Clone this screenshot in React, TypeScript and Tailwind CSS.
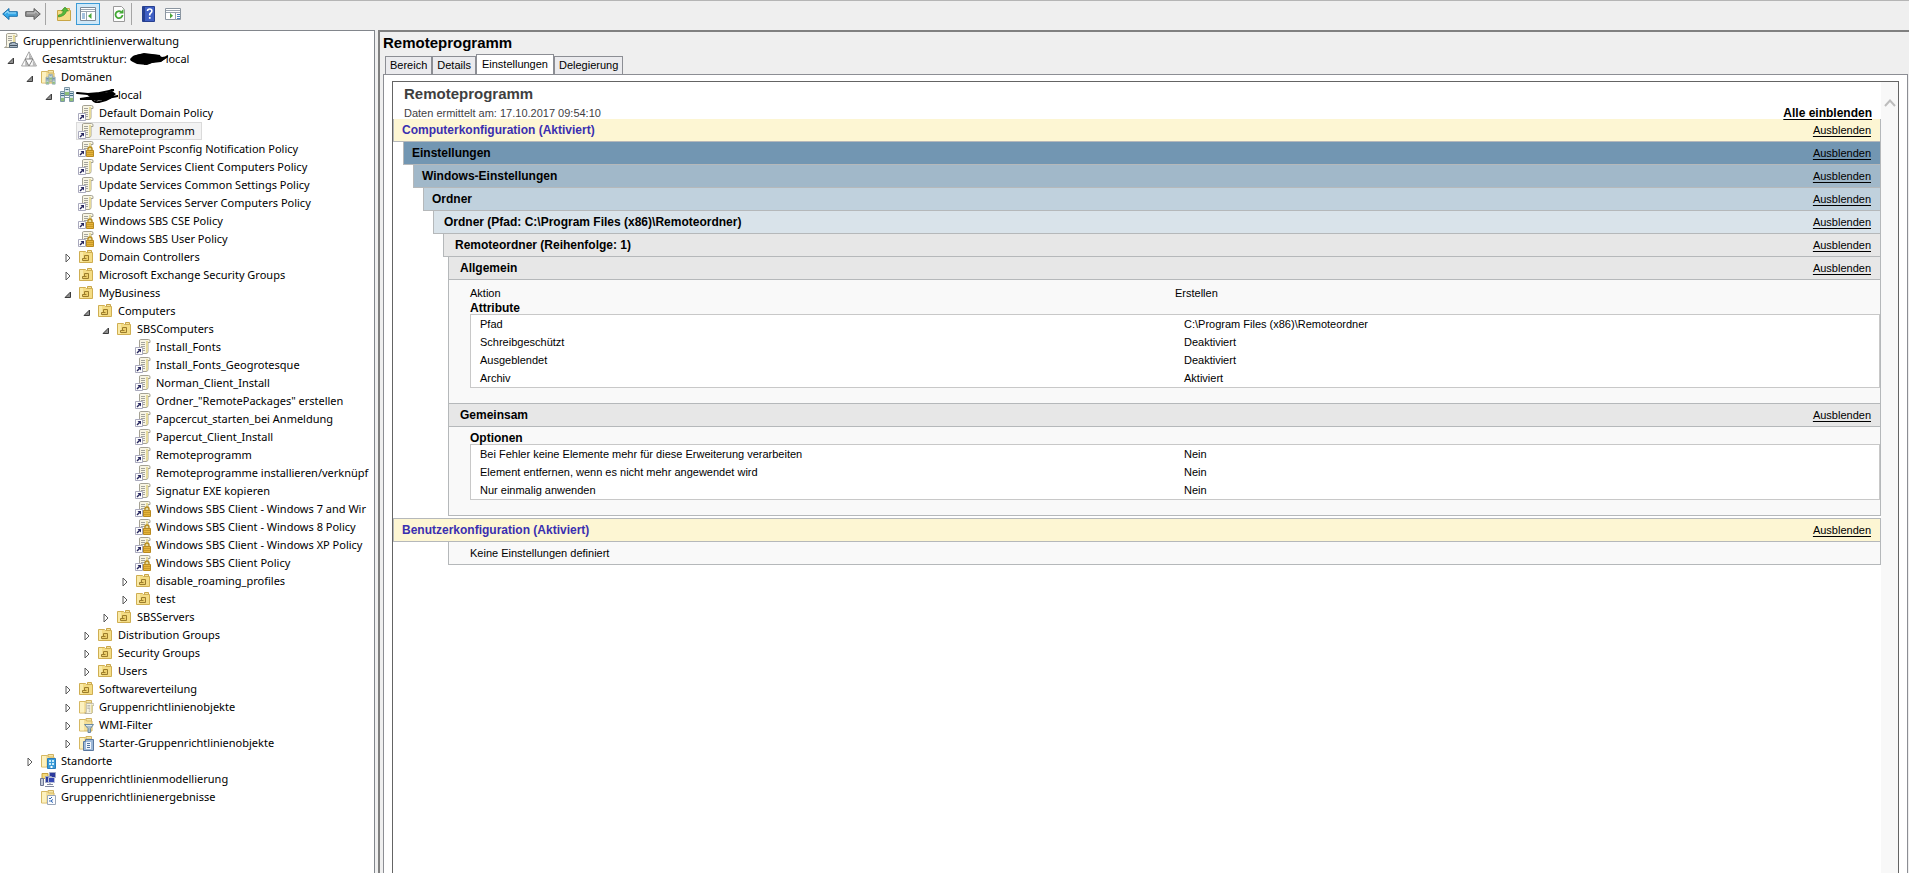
import type { ReactNode } from "react";

type IconName =
  | "root" | "forest" | "domains" | "domain" | "gpo" | "gpoLock" | "ou"
  | "gpoFolder" | "wmi" | "starter" | "sites" | "model" | "result";

type TreeItem = {
  label: string;
  icon: IconName;
  state?: "open" | "closed";
  selected?: boolean;
  redacted?: "forest" | "domain";
  children?: TreeItem[];
};

const gpo = (label: string): TreeItem => ({ label, icon: "gpo" });
const locked = (label: string): TreeItem => ({ label, icon: "gpoLock" });
const closed = (label: string, icon: IconName = "ou"): TreeItem => ({ label, icon, state: "closed" });

const tree: TreeItem[] = [
  {
    label: "Gesamtstruktur:", icon: "forest", state: "open", redacted: "forest",
    children: [
      {
        label: "Domänen", icon: "domains", state: "open",
        children: [
          {
            label: "", icon: "domain", state: "open", redacted: "domain",
            children: [
              gpo("Default Domain Policy"),
              { label: "Remoteprogramm", icon: "gpo", selected: true },
              locked("SharePoint Psconfig Notification Policy"),
              gpo("Update Services Client Computers Policy"),
              gpo("Update Services Common Settings Policy"),
              gpo("Update Services Server Computers Policy"),
              locked("Windows SBS CSE Policy"),
              locked("Windows SBS User Policy"),
              closed("Domain Controllers"),
              closed("Microsoft Exchange Security Groups"),
              {
                label: "MyBusiness", icon: "ou", state: "open",
                children: [
                  {
                    label: "Computers", icon: "ou", state: "open",
                    children: [
                      {
                        label: "SBSComputers", icon: "ou", state: "open",
                        children: [
                          gpo("Install_Fonts"),
                          gpo("Install_Fonts_Geogrotesque"),
                          gpo("Norman_Client_Install"),
                          gpo('Ordner_"RemotePackages" erstellen'),
                          gpo("Papcercut_starten_bei Anmeldung"),
                          gpo("Papercut_Client_Install"),
                          gpo("Remoteprogramm"),
                          gpo("Remoteprogramme installieren/verknüpf"),
                          gpo("Signatur EXE kopieren"),
                          locked("Windows SBS Client - Windows 7 and Wir"),
                          locked("Windows SBS Client - Windows 8 Policy"),
                          locked("Windows SBS Client - Windows XP Policy"),
                          locked("Windows SBS Client Policy"),
                          closed("disable_roaming_profiles"),
                          closed("test"),
                        ],
                      },
                      closed("SBSServers"),
                    ],
                  },
                  closed("Distribution Groups"),
                  closed("Security Groups"),
                  closed("Users"),
                ],
              },
              closed("Softwareverteilung"),
              closed("Gruppenrichtlinienobjekte", "gpoFolder"),
              closed("WMI-Filter", "wmi"),
              closed("Starter-Gruppenrichtlinienobjekte", "starter"),
            ],
          },
        ],
      },
      closed("Standorte", "sites"),
      { label: "Gruppenrichtlinienmodellierung", icon: "model" },
      { label: "Gruppenrichtlinienergebnisse", icon: "result" },
    ],
  },
];

const scroll = (
  <>
    <path d="M5.500 .5h8q1.500 0 1.500 1.500v1.500h-2v9q0 2-2 2H2.500q2 0 2-2V2q0-1.500 1-1.500z" fill="#f8f5e4" stroke="#a5a294" />
    <path d="M11 2v12q2 0 2-2V2z" fill="#e6da9a" />
    <path d="M6 3.500h4M6 5.500h4M6 7.500h4M8 9.500h2M8 11.500h2" stroke="#a3a39c" />
  </>
);

const shortcut = (
  <>
    <path d="M0 8h8v8H0z" fill="#fff" />
    <path d="M.5 8.500h7v7h-7z" fill="#fff" stroke="#a9a9bd" />
    <path d="M2.500 10H6v3.500z" fill="#26265e" />
    <path d="M2 14l2.500-2.500" stroke="#26265e" strokeWidth="1.500" />
  </>
);

const folder = (
  <>
    <path d="M8 1.500h5.500v3H8z" fill="#f5e6a8" stroke="#d0b262" />
    <path d="M1.500 2.500h6l1 1.500h5.500v10h-12.500z" fill="#f5e09a" stroke="#d6b863" />
    <path d="M2 3h4v10.500H2z" fill="#fcf1c0" />
  </>
);

const servers = (
  <>
    <path d="M5.500 .5h5v8h-5z" fill="#dce8ee" stroke="#7d98a6" />
    <path d="M1.500 4.500h4v10h-4zM10.500 4.500h4v10h-4z" fill="#cfdfe6" stroke="#7d98a6" />
    <path d="M6.500 2.500h3M2 6.500h3M11 6.500h3M2 8.500h3M11 8.500h3" stroke="#46708a" />
    <path d="M2 11h3v3H2zM11 11h3v3h-3zM6 5h4v3H6z" fill="#8fbf78" />
    <path d="M6 10.500h4" stroke="#7d98a6" />
  </>
);

const icons: Record<IconName, ReactNode> = {
  root: (
    <>
      {scroll}
      <path d="M7.500 10.500h2v-1h4v1h2v4h-8z" fill="#a9b8c6" stroke="#5a6c7d" />
      <path d="M8 12.500h7" stroke="#44525f" />
    </>
  ),
  forest: (
    <>
      <path d="M8 .8L15.500 15H.5z" fill="#fafafa" stroke="#8f8f8f" strokeWidth=".8" />
      <path d="M8 1.500v6.500h3.500zM4.200 8.500V15H7.800zM11.800 8.500V15H15z" fill="#b9b9b9" />
      <path d="M4.200 8h7.600L8 15z" fill="#fff" stroke="#777" strokeWidth=".9" />
    </>
  ),
  domains: (
    <>
      {folder}
      <g transform="translate(5 5) scale(.7)">{servers}</g>
    </>
  ),
  domain: servers,
  gpo: (
    <>
      {scroll}
      {shortcut}
    </>
  ),
  gpoLock: (
    <>
      {scroll}
      {shortcut}
      <path d="M10 10V8a2 2 0 0 1 4 0v2" fill="none" stroke="#b58a1c" strokeWidth="1.400" />
      <path d="M8.500 9.500h7v6h-7z" fill="#e6b43c" stroke="#b88a20" />
      <path d="M9 11.500h6M9 13.500h6" stroke="#c99a28" />
    </>
  ),
  ou: (
    <>
      <path d="M9.500 1.500h4v3h-4z" fill="#f5e39c" stroke="#c9a548" />
      <path d="M1.500 2.500h6l1 1h6v10h-13z" fill="#f4dc84" stroke="#cfae52" />
      <path d="M2 3h3v10H2z" fill="#faeaa6" />
      <path d="M6.500 6.500h4v5h-6v-2h2z" fill="#edd06c" stroke="#9c7d2c" />
      <path d="M6 9.500h2.500" stroke="#9c7d2c" />
    </>
  ),
  gpoFolder: (
    <>
      {folder}
      <g transform="translate(5 4) scale(.72)">{scroll}</g>
    </>
  ),
  wmi: (
    <>
      {folder}
      <path d="M6.500 7.500h9l-3 4v4h-2.500v-4z" fill="#a9bdcb" stroke="#6c8aa0" />
      <path d="M8 8.500h6" stroke="#dfe9ef" />
    </>
  ),
  starter: (
    <>
      {folder}
      <path d="M7.500 4.500h8v11h-10v-9h2z" fill="#9db8d8" stroke="#5a789f" />
      <path d="M8 7h5v7H8z" fill="#f2f6fb" />
      <path d="M9 8.500h3M9 10.500h3M9 12.500h3" stroke="#53749c" />
    </>
  ),
  sites: (
    <>
      {folder}
      <path d="M7.500 5.500h8v10h-8z" fill="#3a9bd8" stroke="#2a7cba" />
      <path d="M9 7h2v2H9zM12 7h2v2h-2zM9 10h2v2H9zM12 10h2v2h-2z" fill="#c9ecfb" />
      <path d="M10.500 15v-2h2v2" fill="#fff" />
    </>
  ),
  model: (
    <>
      <path d="M2 2.500h6v5H2z" fill="#f4d979" stroke="#c9a23f" />
      <path d="M.5 7.500h3v7h-3z" fill="#c3c9d6" stroke="#6c7590" />
      <path d="M9.500 1.500h6v5h-6zM5.500 5.500h6v6h-6z" fill="#2c3a9c" stroke="#a0a7c4" />
      <path d="M8.500 6.500h6v5h-6z" fill="#3547b4" stroke="#b9bfd8" />
      <path d="M7 13.500h6M10 12v2M5 15.500h9" stroke="#8088a0" />
    </>
  ),
  result: (
    <>
      {folder}
      <path d="M7.500 6.500h8v9h-8z" fill="#fbfcff" stroke="#9aa6b8" />
      <path d="M9 9l1 1 2-2M13 10.500l-2.500 1.500 2.500 1.500M9 12h1" stroke="#2f67b5" fill="none" />
    </>
  ),
};

function Glyph({ children }: { children: ReactNode }) {
  return (
    <svg viewBox="0 0 16 16" className="h-4 w-4 shrink-0" aria-hidden="true">
      {children}
    </svg>
  );
}

function Arrow({ state }: { state?: "open" | "closed" }) {
  return (
    <span className="flex w-[19px] shrink-0 items-center justify-center pl-[3px]">
      {state === "open" && (
        <svg viewBox="0 0 8 8" className="mt-1 h-2 w-2" aria-hidden="true">
          <path d="M6.500 1v5.500H1z" fill="#8f8f8f" stroke="#3c3c3c" />
        </svg>
      )}
      {state === "closed" && (
        <svg viewBox="0 0 8 10" className="mt-[2px] h-[10px] w-2" aria-hidden="true">
          <path d="M2 1l4 4-4 4z" fill="#fff" stroke="#5a5a5a" />
        </svg>
      )}
    </span>
  );
}

// marker scribble over the domain name
function Scribble({ kind }: { kind: "forest" | "domain" }) {
  if (kind === "forest") {
    return (
      <svg viewBox="0 0 38 14" className="-mr-[2px] ml-[3px] h-[14px] w-[38px] shrink-0" aria-hidden="true">
        <path d="M0 7q2-3 6-4 6-2 12-1l10 1 4 2 6-1-3 3-4 3-9 1-5 2-10-1-4-2q-3-1-3-3z" />
        <path d="M3 5l11-3 16 2-20 6 22-3-18 5M30 9l8-5" fill="none" stroke="#000" strokeWidth="2" />
      </svg>
    );
  }
  return (
    <svg viewBox="0 0 42 16" className="-ml-1 h-4 w-[42px] shrink-0" aria-hidden="true">
      <path d="M1 6l11 1 12-1 14-3-24 5 24-1-34 5 22 0 16-3-22 4M15 10q2 6 8 5 7-1 13-5" fill="none" stroke="#000" strokeWidth="2" strokeLinecap="round" />
      <path d="M10 7l14 0 12-3 4 3-6 5-16 1z" />
    </svg>
  );
}

function TreeRow({ item }: { item: TreeItem }) {
  return (
    <li>
      <div className="flex h-[18px]">
        <Arrow state={item.state} />
        <button
          type="button"
          className={
            "flex h-[18px] items-center border pl-px whitespace-nowrap " +
            (item.selected ? "border-[#dadada] bg-[#f3f3f3] pr-[6px]" : "border-transparent")
          }
        >
          <Glyph>{icons[item.icon]}</Glyph>
          <span className="flex items-center pl-[5px]">
            {item.label}
            {item.redacted && (
              <>
                <Scribble kind={item.redacted} />
                local
              </>
            )}
          </span>
        </button>
      </div>
      {item.children && (
        <ul className="pl-[19px]">
          {item.children.map((child) => (
            <TreeRow key={child.label} item={child} />
          ))}
        </ul>
      )}
    </li>
  );
}

function ToolButton({ label, active, children }: { label: string; active?: boolean; children: ReactNode }) {
  return (
    <button
      type="button"
      aria-label={label}
      className={
        "flex h-[22px] w-6 items-center justify-center border " +
        (active ? "border-[#3c9bd6] bg-[#cfe8f8]" : "border-transparent")
      }
    >
      <Glyph>{children}</Glyph>
    </button>
  );
}

function Toolbar() {
  return (
    <header className="flex h-[30px] shrink-0 items-center border-t border-[#b5b5b5] bg-[#efefef] pb-1">
      <button type="button" aria-label="Zurück" className="ml-[2px] flex">
        <Glyph>
          <path d="M.7 8L7 2.500v3.200h8.300v4.600H7v3.200z" fill="#35a8e8" stroke="#1c6ea8" />
          <path d="M3 7.500L6 5v2h8" fill="none" stroke="#a8e0fb" />
        </Glyph>
      </button>
      <button type="button" aria-label="Vorwärts" className="ml-[7px] flex">
        <Glyph>
          <path d="M15.300 8L9 2.500v3.200H.7v4.600H9v3.200z" fill="#949494" stroke="#5f5f5f" />
          <path d="M2 7h8V5l3 2.500" fill="none" stroke="#c6c6c6" />
        </Glyph>
      </button>
      <span className="mx-1 h-[22px] w-px bg-[#a5a5a5]" />
      <div className="flex pl-[2px]">
        <ToolButton label="Eine Ebene nach oben">
          <path d="M1.500 4.500h5l1-2h6v2h1v10h-13z" fill="#f5dc86" stroke="#c9a646" />
          <path d="M2.500 9q4 0 5-4H5.500L9 1l3.500 4h-2q-1 5-8 6z" fill="#52b83c" stroke="#2f8a20" strokeWidth=".6" />
        </ToolButton>
        <ToolButton label="Konsolenstruktur" active>
          <path d="M.5 1.500h15v13H.5z" fill="#fff" stroke="#7c8896" />
          <path d="M1 3.500h14M1 5.500h14M6.500 6v8" stroke="#9aa4b0" />
          <path d="M2 8h3M2 10h3M2 12h3" stroke="#4d83bd" />
          <path d="M11.500 7v6l-3.500-3z" fill="#4ba63a" />
        </ToolButton>
        <span className="w-[7px]" />
        <ToolButton label="Aktualisieren">
          <path d="M2.500 .5h8l3 3v12h-11z" fill="#fdfdfd" stroke="#9a9a9a" />
          <path d="M11.500 9a3.500 3.500 0 1 1-1.500-3.200" fill="none" stroke="#43a835" strokeWidth="1.800" />
          <path d="M8 7.500h4.500V3z" fill="#43a835" />
        </ToolButton>
      </div>
      <span className="mr-[5px] h-[22px] w-px bg-[#a5a5a5]" />
      <div className="flex">
        <ToolButton label="Hilfe">
          <path d="M1.500 .5h12v15h-12z" fill="#3f5fc4" stroke="#263f90" />
          <path d="M2 1h2v14H2z" fill="#26408f" />
          <path d="M6.500 5q0-2 2.200-2t2.200 2q0 1.200-1.200 2T8.700 9.500" fill="none" stroke="#fff" strokeWidth="1.600" />
          <path d="M7.900 11h1.700v1.800H7.900z" fill="#fff" />
        </ToolButton>
        <ToolButton label="Aktionsbereich">
          <path d="M.5 2.500h15v11H.5z" fill="#fff" stroke="#8b95a0" />
          <path d="M1 4.500h14M1 6.500h14M10.500 6v8" stroke="#9aa4b0" />
          <path d="M12 8.500h3M12 10.500h3M12 12.500h3" stroke="#4d83bd" />
          <path d="M5 7v5.500l3-2.700z" fill="#4ba63a" />
        </ToolButton>
      </div>
    </header>
  );
}

const tabs = ["Bereich", "Details", "Einstellungen", "Delegierung"];

function Tabs() {
  return (
    <div role="tablist" className="flex items-end pl-[2px]">
      {tabs.map((tab) =>
        tab === "Einstellungen" ? (
          <button key={tab} role="tab" aria-selected="true" type="button" className="-mb-px h-[21px] border border-b-0 border-[#8c8e94] bg-white px-[5px] pb-[2px]">
            {tab}
          </button>
        ) : (
          <button key={tab} role="tab" aria-selected="false" type="button" className="h-[18px] border border-b-0 border-[#8c8e94] bg-[#ebebee] px-1">
            {tab}
          </button>
        ),
      )}
    </div>
  );
}

function Bar({ title, className }: { title: string; className: string }) {
  return (
    <div className={"flex items-center justify-between border-b border-l border-r border-[#b5b8ba] pr-[9px] " + className}>
      <h3 className="text-xs font-bold">{title}</h3>
      <a href="#" className="underline underline-offset-2">Ausblenden</a>
    </div>
  );
}

function PropertyTable({ rows }: { rows: string[][] }) {
  return (
    <div className="border border-[#c8c8c8] bg-white">
      <table className="w-full table-fixed">
        <tbody>
          {rows.map(([name, value]) => (
            <tr key={name} className="h-[18px]">
              <td className="pl-[9px]">{name}</td>
              <td className="pl-[9px]">{value}</td>
            </tr>
          ))}
        </tbody>
      </table>
    </div>
  );
}

function Report() {
  return (
    <div className="min-w-0 flex-1">
      <div className="pl-[11px] text-[#3f3f3f]">
        <h2 className="pt-[3px] text-[15px] leading-[18px] font-bold">Remoteprogramm</h2>
        <div className="mt-1 flex items-end justify-between pr-[9px]">
          <p className="leading-3">Daten ermittelt am: 17.10.2017 09:54:10</p>
          <a href="#" className="text-xs leading-3 font-bold text-black underline underline-offset-2">Alle einblenden</a>
        </div>
      </div>
      <Bar title="Computerkonfiguration (Aktiviert)" className="h-[23px] bg-[#fdf6d3] pl-2 [&_h3]:text-[#3a2fb0]" />
      <Bar title="Einstellungen" className="ml-[10px] h-[23px] bg-[#7296b2] pl-2" />
      <Bar title="Windows-Einstellungen" className="ml-[20px] h-[23px] bg-[#a1b8c9] pl-2" />
      <Bar title="Ordner" className="ml-[30px] h-[23px] bg-[#c0d1dd] pl-2" />
      <Bar title="Ordner (Pfad: C:\Program Files (x86)\Remoteordner)" className="ml-[40px] h-[23px] bg-[#d9e3ea] pl-[10px]" />
      <Bar title="Remoteordner (Reihenfolge: 1)" className="ml-[50px] h-[23px] bg-[#e7e7e7] pl-[11px]" />
      <div className="ml-[55px]">
        <Bar title="Allgemein" className="h-[23px] bg-[#e7e7e7] pl-[11px]" />
        <div className="border-r border-l border-[#b5b8ba] bg-[#f9f9f9] pt-1 pb-[15px] pl-[21px]">
          <div className="flex h-[18px] items-center">
            <span className="w-1/2">Aktion</span>
            <span className="w-1/2">Erstellen</span>
          </div>
          <h4 className="text-xs leading-3 font-bold">Attribute</h4>
          <PropertyTable
            rows={[
              ["Pfad", "C:\\Program Files (x86)\\Remoteordner"],
              ["Schreibgeschützt", "Deaktiviert"],
              ["Ausgeblendet", "Deaktiviert"],
              ["Archiv", "Aktiviert"],
            ]}
          />
        </div>
        <Bar title="Gemeinsam" className="h-[24px] border-t bg-[#e7e7e7] pl-[11px]" />
        <div className="border-r border-b border-l border-[#b5b8ba] bg-[#f9f9f9] pt-[5px] pb-[15px] pl-[21px]">
          <h4 className="text-xs leading-3 font-bold">Optionen</h4>
          <PropertyTable
            rows={[
              ["Bei Fehler keine Elemente mehr für diese Erweiterung verarbeiten", "Nein"],
              ["Element entfernen, wenn es nicht mehr angewendet wird", "Nein"],
              ["Nur einmalig anwenden", "Nein"],
            ]}
          />
        </div>
      </div>
      <Bar title="Benutzerkonfiguration (Aktiviert)" className="mt-[2px] h-[24px] border-t bg-[#fdf6d3] pl-2 [&_h3]:text-[#3a2fb0]" />
      <p className="ml-[55px] flex h-[23px] items-center border border-t-0 border-[#b5b8ba] bg-[#f9f9f9] pl-[21px]">
        Keine Einstellungen definiert
      </p>
    </div>
  );
}

export default function App() {
  return (
    <div className="flex h-screen flex-col overflow-hidden bg-[#efefef] font-['Liberation_Sans',Arial,sans-serif] text-[11px] text-black">
      <Toolbar />
      <div className="flex min-h-0 flex-1">
        <nav aria-label="Konsolenstruktur" className="w-[375px] shrink-0 overflow-hidden border-t border-r border-[#82868c] bg-white pt-px font-['Noto_Sans',sans-serif]">
          <button type="button" className="flex h-[18px] items-center border border-transparent pl-px whitespace-nowrap">
            <Glyph>{icons.root}</Glyph>
            <span className="pl-[5px]">Gruppenrichtlinienverwaltung</span>
          </button>
          <ul>
            {tree.map((item) => (
              <TreeRow key={item.label} item={item} />
            ))}
          </ul>
        </nav>
        <main className="ml-[3px] flex min-w-0 flex-1 flex-col border-t-2 border-l-2 border-[#808080] pl-[3px]">
          <h1 className="h-[22px] text-[15px] leading-[22px] font-bold">Remoteprogramm</h1>
          <Tabs />
          <div className="mr-px flex min-h-0 flex-1 border border-b-0 border-[#8c8e94] bg-white px-2 pt-[6px]">
            <div className="flex min-w-0 flex-1 overflow-hidden border border-b-0 border-[#646464]">
              <Report />
              <div className="w-[17px] shrink-0 bg-[#f8f8f8] pt-4">
                <svg viewBox="0 0 12 10" className="mx-auto h-[10px] w-3" aria-hidden="true">
                  <path d="M1 8l5-5.500L11 8" fill="none" stroke="#bdbdbd" strokeWidth="2" />
                </svg>
              </div>
            </div>
          </div>
        </main>
      </div>
    </div>
  );
}
